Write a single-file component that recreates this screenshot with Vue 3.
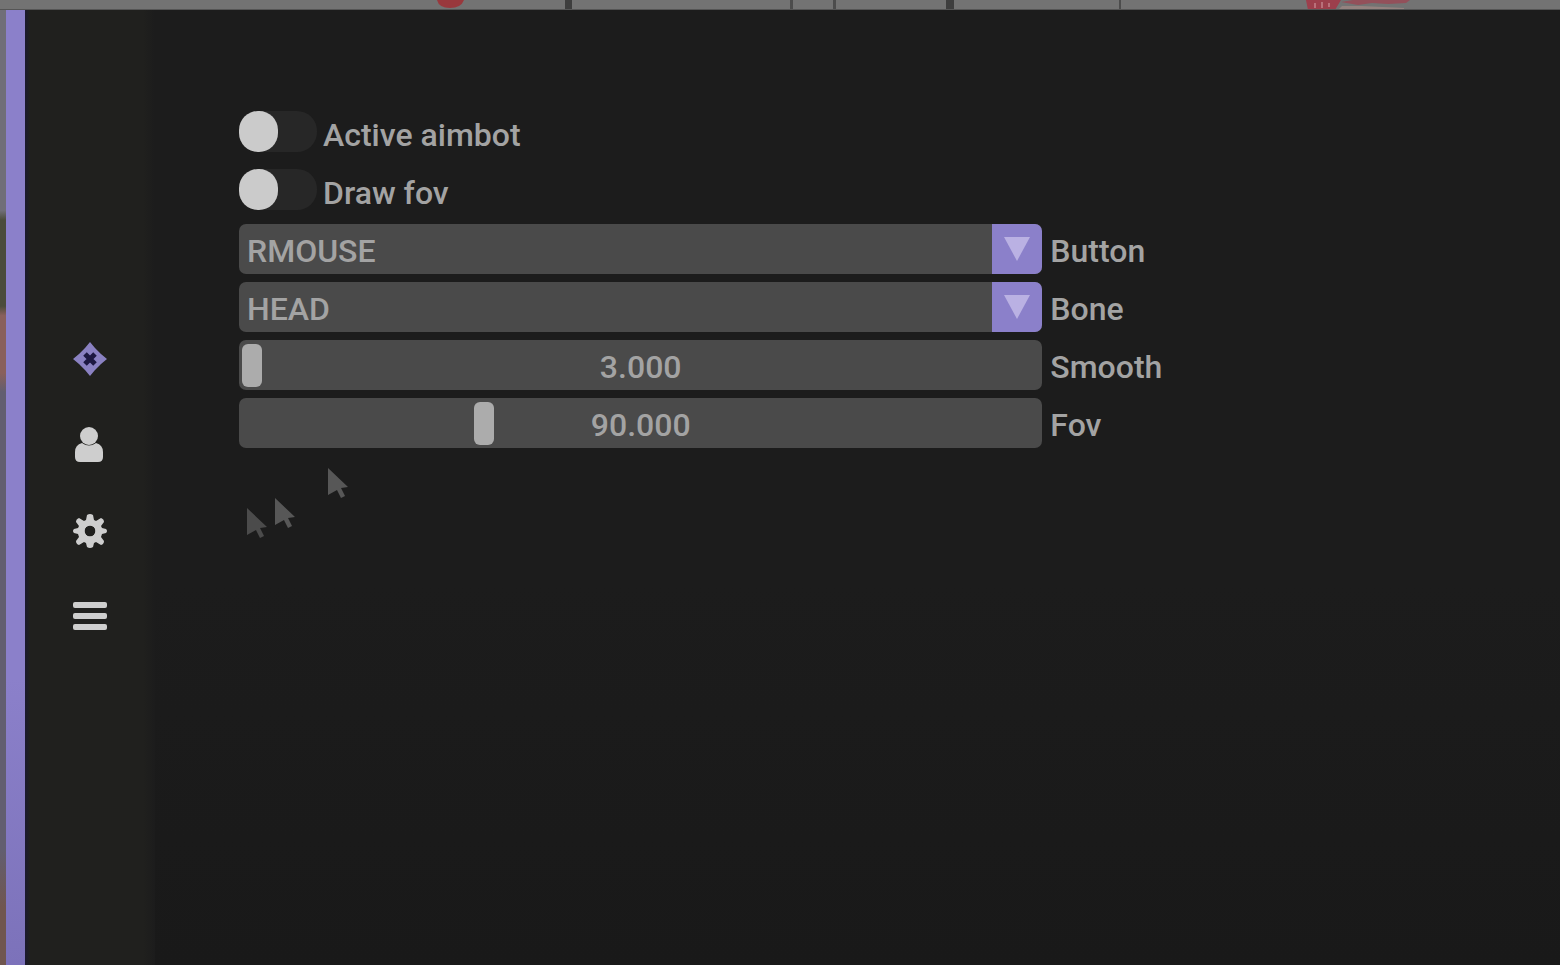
<script setup>
import { ref } from 'vue'

const tabs = ['Aimbot', 'Player', 'Settings', 'Menu']
const tab = ref('Aimbot')

const toggles = ref([
  { id: 'active', label: 'Active aimbot', on: false },
  { id: 'draw-fov', label: 'Draw fov', on: false }
])
const combos = ref([
  { id: 'button', label: 'Button', value: 'RMOUSE', options: ['RMOUSE', 'LMOUSE', 'SHIFT'] },
  { id: 'bone', label: 'Bone', value: 'HEAD', options: ['HEAD', 'NECK', 'CHEST'] }
])
const sliders = ref([
  { id: 'smooth', label: 'Smooth', value: 3, min: 3, max: 50 },
  { id: 'fov', label: 'Fov', value: 90, min: 0, max: 302 }
])
</script>

<template>
  <div class="screen">
    <svg class="backdrop" viewBox="0 0 1560 10" preserveAspectRatio="none" aria-hidden="true">
      <rect width="1560" height="10" fill="#737373" />
      <path d="M437 0h27q-3 8-14 8t-13-8z" fill="#99383d" />
      <path d="M565 0h7v10h-7zM946 0h8v10h-8z" fill="#3e3e3e" />
      <path d="M790 0h3v10h-3zM833 0h3v10h-3zM1119 0h2v10h-2z" fill="#4c4c4c" />
      <path d="M1306 0h35l-6 10h-27z" fill="#9c3f4c" />
      <path d="M1315 3v5M1322 2v6M1329 3v4" stroke="#b8707a" stroke-width="2" />
      <path d="M1341 2l12-2h57l-4 3-18 1-16-1-14 2z" fill="#93505a" />
      <path d="M1342 6l20 0 42 2v2h-66z" fill="#94827f" />
      <rect y="9" width="1560" height="1" fill="#555" />
    </svg>

    <div class="window">
      <nav class="sidebar" aria-label="Sections">
        <button
          v-for="name in tabs"
          :key="name"
          type="button"
          class="tab"
          :class="{ current: tab === name }"
          :aria-label="name"
          @click="tab = name"
        >
          <svg v-if="name === 'Aimbot'" viewBox="0 0 34 34">
            <path d="M17 0L22 6L28 12L34 17L28 22L22 28L17 34L12 28L6 22L0 17L6 12L12 6z" />
            <path class="core" d="M12 12L22 22M22 12L12 22" />
          </svg>
          <svg v-else-if="name === 'Player'" viewBox="0 0 34 34">
            <circle cx="16" cy="8" r="9" />
            <path d="M9 15q7 5 14 0 7 2 7 9v5q0 5-5 5H7q-5 0-5-5v-5q0-7 7-9z" />
          </svg>
          <svg v-else-if="name === 'Settings'" viewBox="0 0 34 34">
            <path
              fill-rule="evenodd"
              d="M14 1q3-2 6 0l1 5 2 1 5-3q3 1 3 4l-3 4 1 2 4 1q2 2 0 4l-4 1-1 3 3 4q0 3-3 4l-5-3-2 1-1 4q-3 2-6 0l-1-4-2-1-5 3q-3-1-3-4l3-4-1-3-4-1q-2-2 0-4l4-1 1-2-3-4q0-3 3-4l5 3 2-1zM17 11.500a5.500 5.500 0 1 0 0 11a5.500 5.500 0 1 0 0-11z"
            />
            <circle class="ring" cx="17" cy="17" r="8" />
          </svg>
          <svg v-else viewBox="0 0 34 34">
            <rect y="2" width="34" height="6" rx="2" />
            <rect y="13" width="34" height="6" rx="2" />
            <rect y="24" width="34" height="6" rx="2" />
          </svg>
        </button>
      </nav>

      <main class="content">
        <form class="options" @submit.prevent>
          <label v-for="t in toggles" :key="t.id" class="toggle-row">
            <input v-model="t.on" type="checkbox" class="toggle" />
            <span class="text">{{ t.label }}</span>
          </label>

          <div v-for="c in combos" :key="c.id" class="row">
            <div class="field">
              <select :id="c.id" v-model="c.value" class="combo">
                <option v-for="o in c.options" :key="o">{{ o }}</option>
              </select>
              <span class="arrow" aria-hidden="true">
                <svg viewBox="0 0 26 24"><path d="M0 0h26L13 24z" /></svg>
              </span>
            </div>
            <label class="text" :for="c.id">{{ c.label }}</label>
          </div>

          <div v-for="s in sliders" :key="s.id" class="row">
            <div class="field">
              <input
                :id="s.id"
                v-model.number="s.value"
                class="slider"
                type="range"
                :min="s.min"
                :max="s.max"
                step="1"
              />
              <output class="value text" :for="s.id">{{ s.value.toFixed(3) }}</output>
            </div>
            <label class="text" :for="s.id">{{ s.label }}</label>
          </div>
        </form>

        <svg class="pointer first" viewBox="0 0 20 30" aria-hidden="true">
          <path d="M0 0L20 19L13 20L17 28L13 30L9 22L0 27z" />
        </svg>
        <svg class="pointer second" viewBox="0 0 20 30" aria-hidden="true">
          <path d="M0 0L20 19L13 20L17 28L13 30L9 22L0 27z" />
        </svg>
        <svg class="pointer third" viewBox="0 0 20 30" aria-hidden="true">
          <path d="M0 0L20 19L13 20L17 28L13 30L9 22L0 27z" />
        </svg>
      </main>
    </div>
  </div>
</template>

<style>
body {
  margin: 0;
  background: #1b1b1b;
}
</style>

<style scoped>
.screen {
  display: flex;
  flex-direction: column;
  min-height: 100vh;
  font: 500 32px/50px Roboto, "Liberation Sans", sans-serif;
  color: #a3a3a3;
}
.backdrop {
  display: block;
  flex: none;
  width: 100%;
  height: 10px;
}
.window {
  display: flex;
  flex: 1;
  padding-left: 6px;
  background: linear-gradient(
    #706e78 0 21%,
    #4b4c3b 22% 31%,
    #89605b 32% 38%,
    #625e70 40% 88%,
    #70564f 94%
  );
}
.sidebar {
  box-sizing: border-box;
  display: flex;
  flex: none;
  flex-direction: column;
  align-items: center;
  justify-content: center;
  gap: 52px;
  width: 149px;
  border-left: 19px solid transparent;
  background:
    linear-gradient(90deg, #1b1930 0, #20201e 5px 118px, #1c1c1c) padding-box,
    linear-gradient(#8b80ca 70%, #7c72ba) border-box;
}
.tab {
  width: 34px;
  height: 34px;
  padding: 0;
  border: 0;
  background: none;
  cursor: pointer;
}
.tab svg {
  display: block;
  width: 34px;
  height: 34px;
  overflow: visible;
  fill: #cecece;
}
.tab.current svg {
  fill: #8a81c2;
}
.tab .core {
  fill: none;
  stroke: #1d1842;
  stroke-width: 5px;
}
.tab .ring {
  fill: none;
  stroke: #cecece;
  stroke-width: 5px;
}
.content {
  position: relative;
  flex: 1;
  min-width: 0;
  padding: 98px 4px 0 84px;
  background: linear-gradient(#1c1c1c 60%, #191919);
}
.options {
  display: flex;
  flex-direction: column;
  gap: 8px;
}
.text {
  padding-top: 5px;
  line-height: 45px;
  white-space: nowrap;
}
.toggle-row {
  display: flex;
  align-items: flex-start;
  align-self: flex-start;
  gap: 6px;
  height: 50px;
}
.toggle {
  appearance: none;
  width: 78px;
  height: 41px;
  margin: 3px 0 0;
  border-radius: 20px;
  background: #272727;
  cursor: pointer;
}
.toggle::before {
  content: "";
  display: block;
  width: 39px;
  height: 41px;
  border-radius: 19px;
  background: #cbcbcb;
}
.toggle:checked {
  background: #8b80ca;
}
.toggle:checked::before {
  margin-left: auto;
}
.row {
  display: grid;
  grid-template-columns: 61% auto;
  justify-content: start;
  column-gap: 8px;
  height: 50px;
}
.field {
  position: relative;
  display: flex;
  overflow: hidden;
  border-radius: 7px;
  background: #4a4a4a;
}
.combo {
  appearance: none;
  width: 100%;
  height: 50px;
  padding: 5px 58px 0 8px;
  border: 0;
  background: transparent;
  color: inherit;
  font: inherit;
  line-height: 45px;
}
.combo option {
  background: #4a4a4a;
}
.arrow {
  position: absolute;
  top: 0;
  right: 0;
  display: flex;
  align-items: center;
  justify-content: center;
  width: 50px;
  height: 50px;
  background: #8b80ca;
  pointer-events: none;
}
.arrow svg {
  width: 26px;
  height: 24px;
  fill: #bab1e3;
}
.slider {
  appearance: none;
  box-sizing: border-box;
  width: 100%;
  height: 50px;
  margin: 0;
  padding: 0 3px;
  background: transparent;
}
.slider::-webkit-slider-thumb {
  appearance: none;
  width: 20px;
  height: 43px;
  border-radius: 6px;
  background: #acacac;
}
.slider::-moz-range-thumb {
  width: 20px;
  height: 43px;
  border: 0;
  border-radius: 6px;
  background: #acacac;
}
.value {
  position: absolute;
  inset: 0;
  text-align: center;
  pointer-events: none;
}
.pointer {
  position: absolute;
  width: 20px;
  height: 30px;
  fill: #575757;
}
.first {
  top: 458px;
  left: 173px;
}
.second {
  top: 488px;
  left: 120px;
}
.third {
  top: 498px;
  left: 92px;
  fill: #4b4b4b;
}
</style>
